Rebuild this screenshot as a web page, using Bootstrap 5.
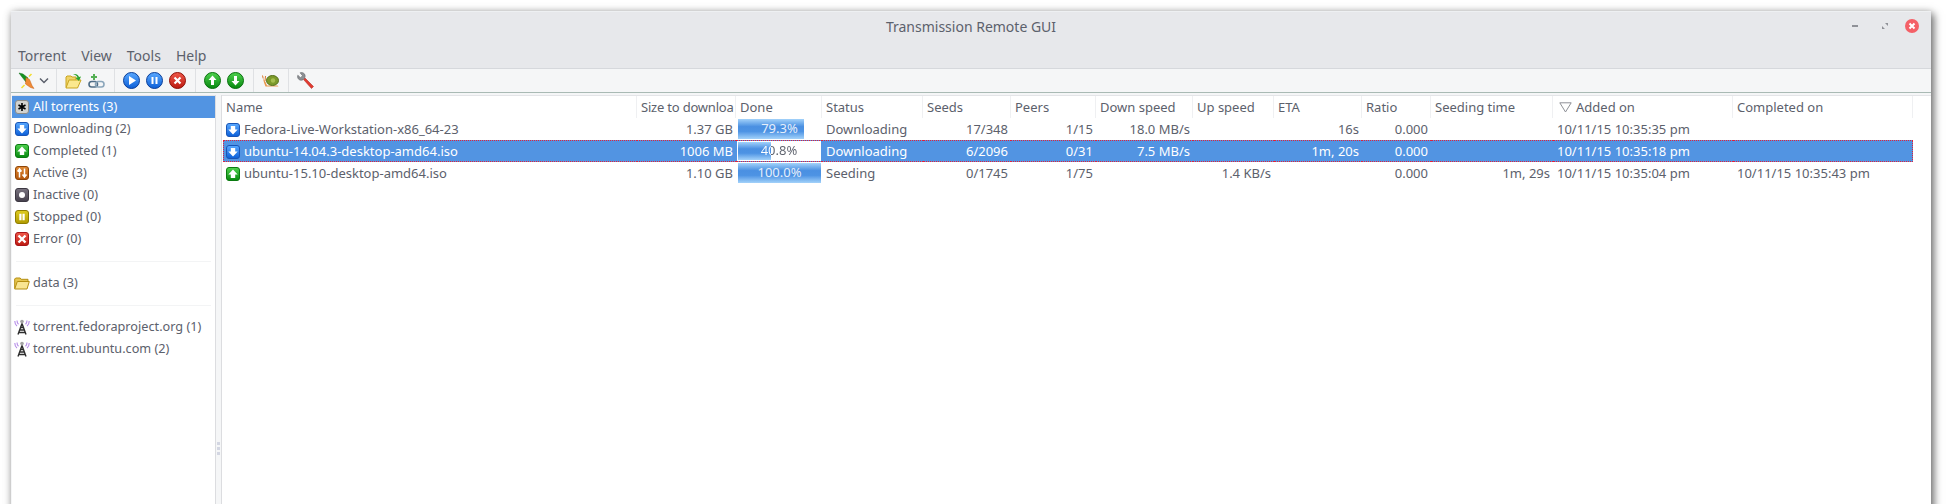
<!DOCTYPE html>
<html lang="en">
<head>
    <meta charset="UTF-8">
    <title>Transmission Remote GUI</title>
    <link href="https://cdn.jsdelivr.net/npm/bootstrap@5.3.2/dist/css/bootstrap.min.css" rel="stylesheet">
    <style>
        html, body { height: 504px; overflow: hidden; background: #fff; }
        body { font-family: "Noto Sans", "Open Sans", sans-serif; font-size: 13px; color: #5c616c; }
        .app-window { margin: 11px 19px 0 11px; height: 900px; background: #f5f6f7; border-top: 1px solid #eef0f2;
            box-shadow: 0 1px 8px rgba(0,0,0,.22), 3px 3px 8px rgba(0,0,0,.5); }
        .title-row { height: 33px; padding-bottom: 5px; background: #e7e8eb; font-size: 14px; position: relative; }
        .win-btns { position: absolute; right: 12px; top: 7px; gap: 13px; }
        .menu-row { height: 24px; padding-bottom: 3px; background: #e7e8eb; padding-left: 7px; gap: 15px; font-size: 14px; border-bottom: 1px solid #d6d8dc; }
        .tool-row { height: 24px; padding-left: 4px; border-bottom: 1px solid #a9bab4; background: #f5f6f7; }
        .tool-btn { width: 23px; height: 23px; display: flex; align-items: center; justify-content: center; }
        .tool-sep { width: 12px; display: flex; justify-content: center; height: 23px; }
        .tool-sep::before { content: ""; width: 1px; background: #dfe1e4; }
        .panes { height: 708px; padding: 2px 0 0 1px; background: #f5f6f7; }
        .side-pane { width: 203px; background: #fff; border-top: 1px solid #e4e5e8; font-size: 12.7px; }
        .side-item { height: 22px; padding-left: 2px; gap: 3px; white-space: nowrap; }
        .side-item.on { background: #5294e2; color: #fff; }
        .side-gap { height: 22px; display: flex; align-items: center; padding: 0 4px; }
        .side-gap::before { content: ""; flex: 1; height: 1px; background: #f3f4f5; }
        .splitter { width: 7px; border-left: 1px solid #dcdde0; border-right: 1px solid #dcdde0; gap: 2px; }
        .splitter i { width: 3px; height: 3px; background: #d3d6e2; }
        .list-pane { background: #fff; flex: 1; min-width: 0; padding-left: 1px; border-top: 1px solid #e4e5e8; }
        .torrent-tbl { table-layout: fixed; width: 1690px; margin: 0; border-collapse: separate; border-spacing: 0; --bs-table-color: #5c616c; --bs-table-bg: transparent; }
        .torrent-tbl th, .torrent-tbl td { height: 22px; padding: 0 3px 1px 4px; font-weight: 400; white-space: nowrap; overflow: hidden; border: 0; vertical-align: middle; line-height: 20px; box-shadow: none; }
        .torrent-tbl th { border-right: 1px solid #eff0f2; }
        .torrent-tbl th:first-child { padding-left: 3px; }
        .torrent-tbl th.size-head { padding-right: 0; letter-spacing: -.2px; }
        .torrent-tbl th svg { margin: 0 4px 0 2px; vertical-align: -1px; }
        .torrent-tbl td.name-cell { padding-left: 3px; }
        .torrent-tbl td.name-cell svg { margin-right: 4px; vertical-align: -3px; }
        .torrent-tbl tr.picked td { background: #5294e2; color: #fff; border-top: 1px dotted #e2213a; border-bottom: 1px dotted #e2213a; padding-bottom: 0; line-height: 18px; }
        .torrent-tbl tr.picked td:first-child { border-left: 1px dotted #e2213a; padding-left: 2px; }
        .torrent-tbl tr.picked td:last-child { border-right: 1px dotted #e2213a; }
        .torrent-tbl td.done-cell { padding: 1px 1px 1px 2px; }
        .torrent-tbl tr.picked td.done-cell { padding: 0 1px 0 1px; }
        .done-track { height: 20px; position: relative; text-align: center; line-height: 19px; }
        .done-fill { position: absolute; left: 0; top: 0; bottom: 0; background: linear-gradient(#a3d2fa, #4a90e2 38%, #4d93e4 62%, #a3d2fa); }
        .done-label { position: relative; display: block; color: #e6eefa; }
        .picked .done-track { background: #fff; border: 1px solid #fff; line-height: 17px; }
        .picked .done-label { color: transparent; -webkit-background-clip: text; background-clip: text; }
    </style>
</head>
<body>
    <svg width="0" height="0" class="d-block position-absolute">
        <defs>
            <linearGradient id="gBlue" x1="0" y1="0" x2="0" y2="1"><stop offset="0" stop-color="#5aa9ff"/><stop offset="1" stop-color="#0b5fd8"/></linearGradient>
            <linearGradient id="gGreen" x1="0" y1="0" x2="0" y2="1"><stop offset="0" stop-color="#4fd24f"/><stop offset="1" stop-color="#07880f"/></linearGradient>
            <linearGradient id="gRed" x1="0" y1="0" x2="0" y2="1"><stop offset="0" stop-color="#f0584a"/><stop offset="1" stop-color="#bb1a10"/></linearGradient>
            <linearGradient id="gOrange" x1="0" y1="0" x2="0" y2="1"><stop offset="0" stop-color="#e08a34"/><stop offset="1" stop-color="#b4560c"/></linearGradient>
            <linearGradient id="gYellow" x1="0" y1="0" x2="0" y2="1"><stop offset="0" stop-color="#e0cc20"/><stop offset="1" stop-color="#b09a00"/></linearGradient>
            <linearGradient id="gDark" x1="0" y1="0" x2="0" y2="1"><stop offset="0" stop-color="#7a7480"/><stop offset="1" stop-color="#45404c"/></linearGradient>
            <symbol id="sq-all" viewBox="0 0 14 14"><rect x=".5" y=".5" width="13" height="13" rx="2.500" fill="#d2d2cf" stroke="#8d8d8a"/><path d="M7 3v8M3.500 5l7 4M10.500 5l-7 4" stroke="#000" stroke-width="1.600"/></symbol>
            <symbol id="sq-down" viewBox="0 0 14 14"><rect x=".5" y=".5" width="13" height="13" rx="2.500" fill="url(#gBlue)" stroke="#1a55b5"/><path d="M4.800 3h4.400v3.500h2.500L7 11.500 2.300 6.500h2.500z" fill="#fff"/></symbol>
            <symbol id="sq-up" viewBox="0 0 14 14"><rect x=".5" y=".5" width="13" height="13" rx="2.500" fill="url(#gGreen)" stroke="#0a7a10"/><path d="M4.800 11h4.400V7.500h2.500L7 2.500 2.300 7.500h2.500z" fill="#fff"/></symbol>
            <symbol id="sq-active" viewBox="0 0 14 14"><rect x=".5" y=".5" width="13" height="13" rx="2.500" fill="url(#gOrange)" stroke="#8f4508"/><path d="M4.500 11.500V4M2.500 5.500l2-2.500 2 2.500M9.500 2.500V10M7.500 8.500l2 2.500 2-2.500" fill="none" stroke="#fff" stroke-width="1.500"/></symbol>
            <symbol id="sq-idle" viewBox="0 0 14 14"><rect x=".5" y=".5" width="13" height="13" rx="2.500" fill="url(#gDark)" stroke="#3c3842"/><circle cx="7" cy="7" r="3" fill="#fff"/></symbol>
            <symbol id="sq-stop" viewBox="0 0 14 14"><rect x=".5" y=".5" width="13" height="13" rx="2.500" fill="url(#gYellow)" stroke="#8f7d00"/><path d="M4.300 3.800h2.200v6.400H4.300zM7.500 3.800h2.200v6.400H7.500z" fill="#fff"/></symbol>
            <symbol id="sq-err" viewBox="0 0 14 14"><rect x=".5" y=".5" width="13" height="13" rx="2.500" fill="url(#gRed)" stroke="#a81418"/><path d="M3.500 3.500l7 7M10.500 3.500l-7 7" stroke="#fff" stroke-width="2.400"/></symbol>
            <symbol id="ic-tower" viewBox="0 0 16 16"><path d="M.8 2c0 2.500.8 4 2.200 5M3 1.500c0 1.800.5 2.900 1.500 3.700M15.200 2c0 2.500-.8 4-2.200 5M13 1.500c0 1.800-.5 2.900-1.500 3.700" fill="none" stroke="#b48ae8" stroke-width="1.100"/><circle cx="8" cy="2.500" r="1.800" fill="#a4a4a4"/><path d="M8 4.500L4 15.500M8 4.500l4 11M6.200 8.500h3.600M5.300 11h5.400M4.500 13.500h7" stroke="#2e2e2e" stroke-width="1.400" fill="none"/></symbol>
            <symbol id="ic-folder" viewBox="0 0 16 14"><path d="M.7 12.500V3l1-1h4.500l1 1.300H14V6" fill="#e6c650" stroke="#b58e12"/><path d="M.7 13l2.600-7.500h12L13 13z" fill="#f9e592" stroke="#b58e12"/></symbol>
        </defs>
    </svg>

    <div class="app-window">
        <div class="title-row d-flex align-items-center justify-content-center">
            Transmission Remote GUI
            <div class="win-btns d-flex align-items-center">
                <svg width="14" height="14" viewBox="0 0 14 14"><rect x="1" y="6" width="6" height="2" fill="#8f9197"/></svg>
                <svg width="14" height="14" viewBox="0 0 14 14"><path d="M4 10V7l3 3zM10 4v3L7 4z" fill="#8f9197"/></svg>
                <svg width="14" height="14" viewBox="0 0 14 14"><circle cx="7" cy="7" r="7" fill="#f46067"/><path d="M4.500 4.500l5 5M9.500 4.500l-5 5" stroke="#fff" stroke-width="2"/></svg>
            </div>
        </div>
        <div class="menu-row d-flex align-items-center">
            <span>Torrent</span><span>View</span><span>Tools</span><span>Help</span>
        </div>
        <div class="tool-row d-flex align-items-center">
            <div class="tool-btn">
                <svg width="18" height="18" viewBox="0 0 18 18"><path d="M1 1l4 1 5 4-2 4-4-5z" fill="#14931f" stroke="#0d6b16" stroke-width=".5"/><path d="M8 5.500l3.500 2 2.500 6 2 3-3.500-1-5-3.500z" fill="#ef8a35" stroke="#c4601a" stroke-width=".5"/><path d="M3.500 16l3-3M11 4.500l2.500-2.500" stroke="#f3dd2c" stroke-width="1.500"/></svg>
            </div>
            <svg width="12" height="8" viewBox="0 0 12 8"><path d="M2 1.500l4 4 4-4" fill="none" stroke="#5c616c" stroke-width="1.500"/></svg>
            <div class="tool-sep"></div>
            <div class="tool-btn">
                <svg width="17" height="16" viewBox="0 0 17 16"><path d="M1 14.500V4l1-1h4l1 1h4v3" fill="#f0d468" stroke="#c9a520"/><path d="M1 15l3-8h12l-3.500 8z" fill="#fbe88e" stroke="#c9a520"/><path d="M8 1c4-.5 5.500 1 6 3l2-.5-2 4.500-3.500-3 2-.5C12 3 10.500 1.800 8 1z" fill="#2da52d"/></svg>
            </div>
            <div class="tool-btn">
                <svg width="17" height="16" viewBox="0 0 17 16"><rect x="1" y="8.500" width="8.500" height="5.500" rx="2.700" fill="none" stroke="#4f6d86" stroke-width="1.600"/><rect x="7.500" y="8.500" width="8.500" height="5.500" rx="2.700" fill="none" stroke="#8ba6bb" stroke-width="1.600"/><path d="M3 3h2V1h2v2h2v2H7v2H5V5H3z" fill="#55b055"/></svg>
            </div>
            <div class="tool-sep"></div>
            <div class="tool-btn"><svg width="17" height="17" viewBox="0 0 17 17"><circle cx="8.500" cy="8.500" r="8" fill="url(#gBlue)" stroke="#0c3f98"/><path d="M6 4l7 4.500L6 13z" fill="#fff"/></svg></div>
            <div class="tool-btn"><svg width="17" height="17" viewBox="0 0 17 17"><circle cx="8.500" cy="8.500" r="8" fill="url(#gBlue)" stroke="#0c3f98"/><path d="M5.500 5h2v7h-2zM9.500 5h2v7h-2z" fill="#fff"/></svg></div>
            <div class="tool-btn"><svg width="17" height="17" viewBox="0 0 17 17"><circle cx="8.500" cy="8.500" r="8" fill="url(#gRed)" stroke="#8e1209"/><path d="M5.500 5.500l6 6M11.500 5.500l-6 6" stroke="#fff" stroke-width="2.200"/></svg></div>
            <div class="tool-sep"></div>
            <div class="tool-btn"><svg width="17" height="17" viewBox="0 0 17 17"><circle cx="8.500" cy="8.500" r="8" fill="url(#gGreen)" stroke="#08700e"/><path d="M7 13V8H4.500l4-4.500 4 4.500H10v5z" fill="#fff"/></svg></div>
            <div class="tool-btn"><svg width="17" height="17" viewBox="0 0 17 17"><circle cx="8.500" cy="8.500" r="8" fill="url(#gGreen)" stroke="#08700e"/><path d="M7 4v5H4.500l4 4.500 4-4.500H10V4z" fill="#fff"/></svg></div>
            <div class="tool-sep"></div>
            <div class="tool-btn">
                <svg width="17" height="13" viewBox="0 0 17 13"><path d="M1 4.500l2.500 3.500L5 11.500h10.500l1 1H3.500L2 8.500z" fill="#e8974c"/><path d="M1.200 4.500L.5 1.500M3 7l.5-5" stroke="#d9772b" stroke-width="1" fill="none"/><ellipse cx="10.500" cy="6.500" rx="6" ry="5" fill="#7c9a2a" stroke="#55701a"/><circle cx="11" cy="6.500" r="2.200" fill="#a6bf50"/></svg>
            </div>
            <div class="tool-sep"></div>
            <div class="tool-btn">
                <svg width="17" height="17" viewBox="0 0 17 17"><path d="M6.500 7.500l1.500-1.500 8.500 8.500-2 2z" fill="#e23b30" stroke="#a81f18" stroke-width=".5"/><path d="M.8 3.200l2.700 2.500 2-2L3.100.8c2-.9 4.300.2 4.900 2.200.3 1.100.2 2.200-.4 3.100L6 7.700C5 8.300 3.800 8.400 2.800 8 1 7.300 0 5.200.8 3.200z" fill="#8d9094" stroke="#55585c" stroke-width=".5"/></svg>
            </div>
        </div>

        <div class="panes d-flex">
            <div class="side-pane">
                <div class="side-item on d-flex align-items-center"><svg width="16" height="14"><use href="#sq-all"/></svg><span>All torrents (3)</span></div>
                <div class="side-item d-flex align-items-center"><svg width="16" height="14"><use href="#sq-down"/></svg><span>Downloading (2)</span></div>
                <div class="side-item d-flex align-items-center"><svg width="16" height="14"><use href="#sq-up"/></svg><span>Completed (1)</span></div>
                <div class="side-item d-flex align-items-center"><svg width="16" height="14"><use href="#sq-active"/></svg><span>Active (3)</span></div>
                <div class="side-item d-flex align-items-center"><svg width="16" height="14"><use href="#sq-idle"/></svg><span>Inactive (0)</span></div>
                <div class="side-item d-flex align-items-center"><svg width="16" height="14"><use href="#sq-stop"/></svg><span>Stopped (0)</span></div>
                <div class="side-item d-flex align-items-center"><svg width="16" height="14"><use href="#sq-err"/></svg><span>Error (0)</span></div>
                <div class="side-gap"></div>
                <div class="side-item d-flex align-items-center"><svg width="16" height="14"><use href="#ic-folder"/></svg><span>data (3)</span></div>
                <div class="side-gap"></div>
                <div class="side-item d-flex align-items-center"><svg width="16" height="16"><use href="#ic-tower"/></svg><span>torrent.fedoraproject.org (1)</span></div>
                <div class="side-item d-flex align-items-center"><svg width="16" height="16"><use href="#ic-tower"/></svg><span>torrent.ubuntu.com (2)</span></div>
            </div>
            <div class="splitter d-flex flex-column align-items-center justify-content-center"><i></i><i></i><i></i></div>
            <div class="list-pane">
                <table class="table torrent-tbl">
                    <colgroup>
                        <col style="width:414px"><col style="width:99px"><col style="width:86px"><col style="width:101px"><col style="width:88px"><col style="width:85px"><col style="width:97px"><col style="width:81px"><col style="width:88px"><col style="width:69px"><col style="width:122px"><col style="width:180px"><col style="width:180px">
                    </colgroup>
                    <thead>
                        <tr>
                            <th>Name</th><th class="size-head">Size to downloa</th><th>Done</th><th>Status</th><th>Seeds</th><th>Peers</th><th>Down speed</th><th>Up speed</th><th>ETA</th><th>Ratio</th><th>Seeding time</th>
                            <th><svg width="13" height="11" viewBox="0 0 13 11"><path d="M.8.800h11.400L6.500 10z" fill="none" stroke="#8f9197"/></svg>Added on</th><th>Completed on</th>
                        </tr>
                    </thead>
                    <tbody>
                        <tr>
                            <td class="name-cell"><svg width="14" height="14"><use href="#sq-down"/></svg>Fedora-Live-Workstation-x86_64-23</td>
                            <td class="text-end">1.37 GB</td>
                            <td class="done-cell"><div class="done-track"><div class="done-fill" style="width:79.3%"></div><span class="done-label">79.3%</span></div></td>
                            <td>Downloading</td><td class="text-end">17/348</td><td class="text-end">1/15</td><td class="text-end">18.0 MB/s</td><td></td><td class="text-end">16s</td><td class="text-end">0.000</td><td></td><td>10/11/15 10:35:35 pm</td><td></td>
                        </tr>
                        <tr class="picked">
                            <td class="name-cell"><svg width="14" height="14"><use href="#sq-down"/></svg>ubuntu-14.04.3-desktop-amd64.iso</td>
                            <td class="text-end">1006 MB</td>
                            <td class="done-cell"><div class="done-track"><div class="done-fill" style="width:40.8%"></div><span class="done-label" style="background-image:linear-gradient(90deg,#fff 40.8%,#5c616c 40.8%)">40.8%</span></div></td>
                            <td>Downloading</td><td class="text-end">6/2096</td><td class="text-end">0/31</td><td class="text-end">7.5 MB/s</td><td></td><td class="text-end">1m, 20s</td><td class="text-end">0.000</td><td></td><td>10/11/15 10:35:18 pm</td><td></td>
                        </tr>
                        <tr>
                            <td class="name-cell"><svg width="14" height="14"><use href="#sq-up"/></svg>ubuntu-15.10-desktop-amd64.iso</td>
                            <td class="text-end">1.10 GB</td>
                            <td class="done-cell"><div class="done-track"><div class="done-fill" style="width:100%"></div><span class="done-label">100.0%</span></div></td>
                            <td>Seeding</td><td class="text-end">0/1745</td><td class="text-end">1/75</td><td></td><td class="text-end">1.4 KB/s</td><td></td><td class="text-end">0.000</td><td class="text-end">1m, 29s</td><td>10/11/15 10:35:04 pm</td><td>10/11/15 10:35:43 pm</td>
                        </tr>
                    </tbody>
                </table>
            </div>
        </div>
    </div>
    <script src="https://cdn.jsdelivr.net/npm/bootstrap@5.3.2/dist/js/bootstrap.bundle.min.js"></script>
</body>
</html>
